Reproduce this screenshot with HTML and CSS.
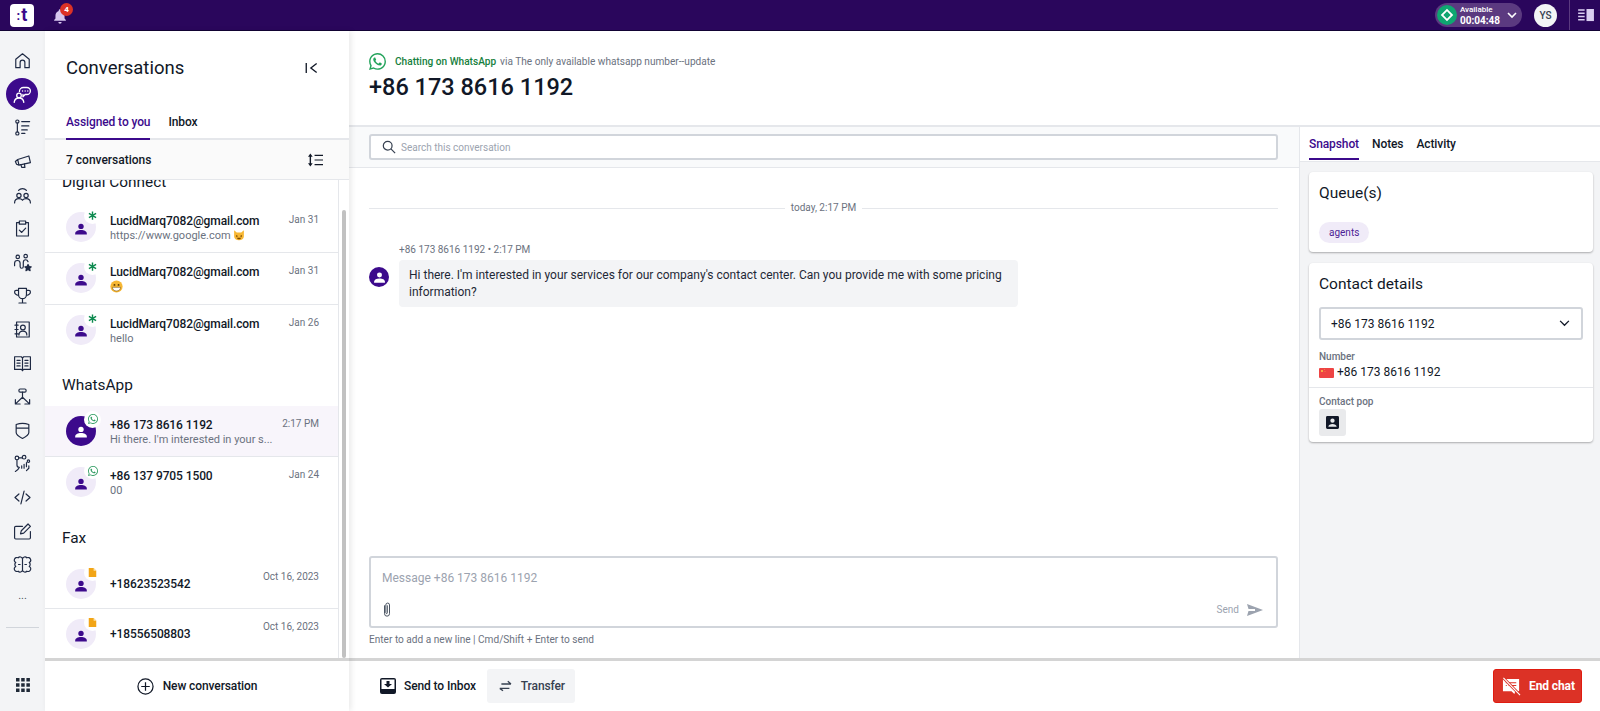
FILE: index.html
```html
<!DOCTYPE html>
<html lang="en">
<head>
<meta charset="utf-8">
<title>Conversations</title>
<link rel="stylesheet" href="styles.css">
</head>
<body>
<svg class="defs" width="0" height="0">
  <symbol id="person" viewBox="0 0 24 24"><circle cx="12" cy="7.5" r="4.6" fill="currentColor"/><path d="M2 20c0-4 4.500-6.200 10-6.200S22 16 22 20v1.500H2z" fill="currentColor"/></symbol>
  <symbol id="wa" viewBox="0 0 24 24"><path fill="currentColor" d="M17.472 14.382c-.297-.149-1.758-.867-2.03-.967-.273-.099-.471-.148-.67.15-.197.297-.767.966-.94 1.164-.173.199-.347.223-.644.075-.297-.15-1.255-.463-2.39-1.475-.883-.788-1.48-1.761-1.653-2.059-.173-.297-.018-.458.13-.606.134-.133.298-.347.446-.52.149-.174.198-.298.298-.497.099-.198.05-.371-.025-.52-.075-.149-.669-1.612-.916-2.207-.242-.579-.487-.5-.669-.51-.173-.008-.371-.01-.57-.01-.198 0-.52.074-.792.372-.272.297-1.04 1.016-1.04 2.479 0 1.462 1.065 2.875 1.213 3.074.149.198 2.096 3.2 5.077 4.487.709.306 1.262.489 1.694.625.712.227 1.36.195 1.871.118.571-.085 1.758-.719 2.006-1.413.248-.694.248-1.289.173-1.413-.074-.124-.272-.198-.57-.347m-5.421 7.403h-.004a9.87 9.87 0 01-5.031-1.378l-.361-.214-3.741.982.998-3.648-.235-.374a9.86 9.86 0 01-1.51-5.26c.001-5.45 4.436-9.884 9.888-9.884 2.64 0 5.122 1.03 6.988 2.898a9.825 9.825 0 012.893 6.994c-.003 5.45-4.437 9.884-9.885 9.884m8.413-18.297A11.815 11.815 0 0012.05 0C5.495 0 .16 5.335.157 11.892c0 2.096.547 4.142 1.588 5.945L.057 24l6.305-1.654a11.882 11.882 0 005.683 1.448h.005c6.554 0 11.89-5.335 11.893-11.893a11.821 11.821 0 00-3.48-8.413z"/></symbol>
  <symbol id="star" viewBox="0 0 12 12"><path d="M6 .5v11M1.200 3.200l9.600 5.600M10.800 3.200l-9.600 5.600" stroke="currentColor" stroke-width="1.900" fill="none"/></symbol>
  <symbol id="doc" viewBox="0 0 12 12"><path d="M1 0h6.500L11 3.500V12H1z" fill="currentColor"/><path d="M7.500 0v3.500H11z" fill="#fde3a7"/></symbol>
</svg>

<header class="topbar">
  <div class="logo"><span class="logo-dots">:</span><span class="logo-t">t</span></div>
  <div class="bell">
    <svg viewBox="0 0 24 24" class="bell-icon"><path d="M12 2a2 2 0 0 1 2 2v.6c3 .9 4.800 3.500 4.800 6.800v4.400l2 2.200v1H3.200v-1l2-2.200v-4.400c0-3.300 1.800-5.900 4.800-6.800V4a2 2 0 0 1 2-2zM9.500 21h5a2.500 2.500 0 0 1-5 0z" fill="#d6c6ee"/></svg>
    <span class="badge">4</span>
  </div>
  <div class="spacer"></div>
  <div class="status">
    <span class="status-dot"><svg viewBox="0 0 20 20" width="14" height="14"><rect x="5" y="5" width="10" height="10" transform="rotate(45 10 10)" fill="none" stroke="#fff" stroke-width="2.600"/></svg></span>
    <span class="status-text"><span class="status-label">Available</span><span class="status-time">00:04:48</span></span>
    <svg class="status-chev" viewBox="0 0 12 12" width="12" height="12"><path d="M2 4l4 4 4-4" fill="none" stroke="#fff" stroke-width="1.600"/></svg>
  </div>
  <div class="user">YS</div>
  <div class="panel-toggle">
    <svg viewBox="0 0 18 14" width="17" height="13"><path d="M0 1h7M0 4.500h7M0 8h7M0 11.500h7" stroke="#d9cdf0" stroke-width="1.700"/><rect x="9" y="0" width="8" height="13" fill="#d9cdf0"/></svg>
  </div>
</header>

<div class="app">
  <nav class="rail">
    <a class="rail-item"><svg class="ri" viewBox="0 0 24 24"><path d="M3.500 21V10.500L12 3.500l8.500 7V21H15v-6.500a3 3 0 0 0-6 0V21z"/></svg></a>
    <a class="rail-item active"><span class="rail-active"><svg class="ri" viewBox="0 0 24 24"><circle cx="8" cy="13" r="2.600"/><path d="M2.500 21c.3-3 2.500-5 5.500-5s5.200 2 5.500 5"/><path d="M8.500 8.500C8.500 6 10.500 4 13 4h4a4 4 0 0 1 0 8h-2l-2.500 2.500V12"/><path d="M12 8h.1M15 8h.1M18 8h.1"/></svg></span></a>
    <a class="rail-item"><svg class="ri" viewBox="0 0 24 24"><circle cx="5.500" cy="4.500" r="2"/><circle cx="5.500" cy="19.500" r="2"/><path d="M5.500 6.500v11M11 4.500h10M11 10h9M11 15h7M11 19.500h4"/></svg></a>
    <a class="rail-item"><svg class="ri" viewBox="0 0 24 24"><path d="M6 9.500L20 5l2 8.500-14.500 3zM6 9.500L3 12l1.500 3.500 3 1M10 16l1 3.500h4l-.5-4.500"/></svg></a>
    <a class="rail-item"><svg class="ri" viewBox="0 0 24 24"><path d="M7 5.500C9.500 2.500 14.500 2.500 17 5.500"/><circle cx="7.500" cy="12" r="2.700"/><circle cx="16.500" cy="12" r="2.700"/><path d="M2 21.500c0-3.500 2.200-5.500 5.500-5.500 2 0 3.500.7 4.500 2 1-1.300 2.500-2 4.500-2 3.300 0 5.500 2 5.500 5.500"/></svg></a>
    <a class="rail-item"><svg class="ri" viewBox="0 0 24 24"><path d="M8 4.500H4.500v17h15v-17H16"/><rect x="8" y="2.500" width="8" height="4"/><path d="M8 14l3 3 5-5.500"/></svg></a>
    <a class="rail-item"><svg class="ri" viewBox="0 0 24 24"><circle cx="6" cy="5" r="2.200"/><circle cx="16" cy="4" r="2.200"/><path d="M2 16v-3c0-2 1.500-3.500 3.500-3.500S9 11 9 13v4c0 3 4 3 4 0v-5c0-2 1.500-3.500 3-3.500s2.500 1 3 2.500"/><path d="M19 14.500l1.300 2.700 2.700.3-2 2 .6 2.800-2.600-1.400-2.600 1.400.6-2.800-2-2 2.700-.3z" class="filled"/></svg></a>
    <a class="rail-item"><svg class="ri" viewBox="0 0 24 24"><path d="M7 3h10v8a5 5 0 0 1-10 0zM7 5.500H4c-1.500 0-2 1-2 2.200C2 10 4.200 11.500 7.300 12M17 5.500h3c1.500 0 2 1 2 2.200 0 2.300-2.200 3.800-5.300 4.300M12 16v5M7.500 21.500h9"/></svg></a>
    <a class="rail-item"><svg class="ri" viewBox="0 0 24 24"><rect x="4.500" y="2.500" width="16" height="19"/><circle cx="12.500" cy="9.500" r="3"/><path d="M7.500 19c0-3 2-5 5-5s5 2 5 5M2.500 6.500h4M2.500 12h4M2.500 17.500h4"/></svg></a>
    <a class="rail-item"><svg class="ri" viewBox="0 0 24 24"><path d="M2 3.500h8.500L12 5l1.500-1.500H22v16h-8.500L12 21l-1.500-1.500H2zM12 5v16M5 8h4M5 11.500h4M5 15h4M15 8h4M15 11.500h4M15 15h4"/></svg></a>
    <a class="rail-item"><svg class="ri" viewBox="0 0 24 24"><rect x="7.500" y="2.500" width="9" height="4" rx="1.500"/><path d="M12 6.500v6.500M12 13l-8.500 8M12 13l8.500 8M3 16v5.500h6M21 16v5.500h-6"/></svg></a>
    <a class="rail-item"><svg class="ri" viewBox="0 0 24 24"><path d="M4 4.500C9 2.500 15 2.500 20 4.500v10c0 3-4 5.500-8 7.500-4-2-8-4.500-8-7.500zM4 9h16"/></svg></a>
    <a class="rail-item"><svg class="ri" viewBox="0 0 24 24"><circle cx="5" cy="5" r="2.300"/><circle cx="14" cy="4" r="2.300"/><circle cx="19.500" cy="9" r="1.500"/><path d="M5 7.500V14a3 3 0 0 0 3 3M7.300 5h4.500M3 22c3-1.500 4-3 5-5M20 15v3l-3 3M11 15v3M14 13v5M17 11v5"/></svg></a>
    <a class="rail-item"><svg class="ri" viewBox="0 0 24 24"><path d="M7.500 7.500L2.500 12l5 4.500M16.500 7.500l5 4.500-5 4.500M14 4l-4 16"/></svg></a>
    <a class="rail-item"><svg class="ri" viewBox="0 0 24 24"><path d="M12 5.500H3.500a1.500 1.500 0 0 0-1.500 1.500v13a1.500 1.500 0 0 0 1.500 1.500h17A1.500 1.500 0 0 0 22 20v-8M9.500 15l1-4 8.500-8.500 3 3-8.500 8.500z"/></svg></a>
    <a class="rail-item"><svg class="ri" viewBox="0 0 24 24"><path d="M12 5A3.200 3.200 0 0 0 6.500 3.500 3.200 3.200 0 0 0 3.500 9.500 3.200 3.200 0 0 0 3.500 14.500 3.200 3.200 0 0 0 6.500 20.500 3.200 3.200 0 0 0 12 19 3.200 3.200 0 0 0 17.500 20.500 3.200 3.200 0 0 0 20.500 14.500 3.200 3.200 0 0 0 20.500 9.500 3.200 3.200 0 0 0 17.500 3.500 3.200 3.200 0 0 0 12 5zM12 5v14M7 12h2M15 12h2"/></svg></a>
    <a class="rail-item rail-more">...</a>
    <div class="rail-rule"></div>
    <div class="spacer"></div>
    <a class="rail-grid"><svg viewBox="0 0 14 14" width="14" height="14"><path d="M0 0h3.500v3.500H0zM5.200 0h3.500v3.500H5.200zM10.400 0h3.500v3.500h-3.500zM0 5.200h3.500v3.500H0zM5.200 5.200h3.500v3.500H5.200zM10.400 5.200h3.500v3.500h-3.500zM0 10.400h3.500v3.500H0zM5.200 10.400h3.500v3.500H5.200zM10.400 10.400h3.500v3.500h-3.500z" fill="#1f2937"/></svg></a>
  </nav>

  <aside class="convs">
    <div class="convs-head">
      <h1 class="convs-title">Conversations</h1>
      <svg class="collapse" viewBox="0 0 18 14" width="15" height="12"><path d="M1.500 1v12M14 1.500L7 7l7 5.500" fill="none" stroke="#111827" stroke-width="1.600"/></svg>
    </div>
    <div class="convs-tabs">
      <span class="tab tab-on">Assigned to you</span>
      <span class="tab">Inbox</span>
    </div>
    <div class="convs-count">
      <span>7 conversations</span>
      <svg viewBox="0 0 16 14" width="15" height="14"><path d="M2.500 2v10" stroke="#111827" stroke-width="1.500"/><path d="M0 3.500L2.500 0 5 3.500zM0 10.500L2.500 14 5 10.500z" fill="#111827"/><path d="M7 2h9M7 7h9M7 12h9" stroke="#111827" stroke-width="1.300"/></svg>
    </div>
    <div class="list-wrap">
      <div class="list">
        <h2 class="group group-first">Digital Connect</h2>
        <div class="row line">
          <div class="av"><svg class="av-person"><use href="#person"/></svg><span class="av-badge b-star"><svg><use href="#star"/></svg></span></div>
          <div class="row-main"><div class="row-name">LucidMarq7082@gmail.com</div><div class="row-sub">https://www.google.com <svg class="emoji" viewBox="0 0 16 16"><path d="M1.500 1.500L5 4.500h6l3.500-3V10c0 3-3 5-6.500 5s-6.500-2-6.500-5z" fill="#f7b733"/><path d="M4 8.500l2 1-2 1M12 8.500l-2 1 2 1" stroke="#7a4a00" fill="none"/><path d="M5.500 11.500h5c0 1.500-1 2.300-2.500 2.300s-2.500-.8-2.500-2.300z" fill="#7a4a00"/></svg></div></div>
          <div class="row-date">Jan 31</div>
        </div>
        <div class="row line">
          <div class="av"><svg class="av-person"><use href="#person"/></svg><span class="av-badge b-star"><svg><use href="#star"/></svg></span></div>
          <div class="row-main"><div class="row-name">LucidMarq7082@gmail.com</div><div class="row-sub"><svg class="emoji emoji-lg" viewBox="0 0 16 16"><circle cx="8" cy="8" r="7.500" fill="#f7b733"/><circle cx="5.500" cy="6" r="1.200" fill="#5c3a00"/><circle cx="10.500" cy="6" r="1.200" fill="#5c3a00"/><path d="M3 9h10c0 3-2.200 4.500-5 4.500S3 12 3 9z" fill="#fff" stroke="#5c3a00" stroke-width=".6"/></svg></div></div>
          <div class="row-date">Jan 31</div>
        </div>
        <div class="row">
          <div class="av"><svg class="av-person"><use href="#person"/></svg><span class="av-badge b-star"><svg><use href="#star"/></svg></span></div>
          <div class="row-main"><div class="row-name">LucidMarq7082@gmail.com</div><div class="row-sub">hello</div></div>
          <div class="row-date">Jan 26</div>
        </div>
        <h2 class="group">WhatsApp</h2>
        <div class="row line row-on">
          <div class="av av-on"><svg class="av-person"><use href="#person"/></svg><span class="av-badge b-wa"><svg><use href="#wa"/></svg></span></div>
          <div class="row-main"><div class="row-name">+86 173 8616 1192</div><div class="row-sub">Hi there. I'm interested in your s...</div></div>
          <div class="row-date">2:17 PM</div>
        </div>
        <div class="row">
          <div class="av"><svg class="av-person"><use href="#person"/></svg><span class="av-badge b-wa"><svg><use href="#wa"/></svg></span></div>
          <div class="row-main"><div class="row-name">+86 137 9705 1500</div><div class="row-sub">00</div></div>
          <div class="row-date">Jan 24</div>
        </div>
        <h2 class="group group-fax">Fax</h2>
        <div class="row line row-fax">
          <div class="av"><svg class="av-person"><use href="#person"/></svg><span class="av-badge b-doc"><svg><use href="#doc"/></svg></span></div>
          <div class="row-main"><div class="row-name">+18623523542</div></div>
          <div class="row-date">Oct 16, 2023</div>
        </div>
        <div class="row row-fax">
          <div class="av"><svg class="av-person"><use href="#person"/></svg><span class="av-badge b-doc"><svg><use href="#doc"/></svg></span></div>
          <div class="row-main"><div class="row-name">+18556508803</div></div>
          <div class="row-date">Oct 16, 2023</div>
        </div>
      </div>
      <div class="scroll"><div class="scroll-thumb"></div></div>
    </div>
    <div class="convs-foot">
      <svg viewBox="0 0 18 18" width="17" height="17"><circle cx="9" cy="9" r="8" fill="none" stroke="#111827" stroke-width="1.300"/><path d="M9 4.500v9M4.500 9h9" stroke="#111827" stroke-width="1.300"/></svg>
      <span>New conversation</span>
    </div>
  </aside>

  <main class="main">
    <div class="head">
      <div class="head-via">
        <svg class="head-wa"><use href="#wa"/></svg>
        <span class="via-green">Chatting on WhatsApp</span>
        <span class="via-grey">via The only available whatsapp number--update</span>
      </div>
      <div class="head-title">+86 173 8616 1192</div>
    </div>
    <div class="work">
      <section class="chat">
        <div class="search-strip">
          <div class="search">
            <svg viewBox="0 0 16 16" width="14" height="14"><circle cx="6.500" cy="6.500" r="5" fill="none" stroke="#374151" stroke-width="1.400"/><path d="M10.200 10.200L15 15" stroke="#374151" stroke-width="1.400"/></svg>
            <span>Search this conversation</span>
          </div>
        </div>
        <div class="thread">
          <div class="day"><span>today, 2:17 PM</span></div>
          <div class="msg-meta">+86 173 8616 1192 • 2:17 PM</div>
          <div class="msg">
            <div class="msg-av"><svg><use href="#person"/></svg></div>
            <div class="bubble">Hi there. I'm interested in your services for our company's contact center. Can you provide me with some pricing information?</div>
          </div>
        </div>
        <div class="composer-wrap">
          <div class="composer">
            <div class="composer-ph">Message +86 173 8616 1192</div>
            <div class="composer-tools">
              <svg viewBox="0 0 12 20" width="10" height="17"><path d="M3 5v10a3 3 0 0 0 6 0V4.500a2.200 2.200 0 0 0-4.400 0V14a.9.9 0 0 0 1.800 0V5" fill="none" stroke="#4b5563" stroke-width="1.200"/></svg>
              <div class="send"><span>Send</span><svg viewBox="0 0 16 12" width="16" height="12"><path d="M0 0l16 6-16 6 1.500-5H8V5H1.500z" fill="#9ca3af"/></svg></div>
            </div>
          </div>
          <div class="hint">Enter to add a new line | Cmd/Shift + Enter to send</div>
        </div>
      </section>
      <section class="side">
        <div class="side-tabs">
          <span class="tab tab-on">Snapshot</span>
          <span class="tab">Notes</span>
          <span class="tab">Activity</span>
        </div>
        <div class="card card-q">
          <h3 class="card-title">Queue(s)</h3>
          <span class="chip">agents</span>
        </div>
        <div class="card card-c">
          <div class="card-pad">
            <h3 class="card-title">Contact details</h3>
            <div class="select"><span>+86 173 8616 1192</span><svg viewBox="0 0 12 8" width="11" height="7"><path d="M1 1l5 5 5-5" fill="none" stroke="#111827" stroke-width="1.500"/></svg></div>
            <div class="field-label">Number</div>
            <div class="field-value">
              <svg viewBox="0 0 15 10" width="15" height="10"><rect width="15" height="10" rx="1" fill="#ee4444"/><circle cx="3" cy="3" r="1.100" fill="#f8c14a"/><circle cx="5.500" cy="1.500" r=".4" fill="#f8c14a"/><circle cx="6" cy="3.500" r=".4" fill="#f8c14a"/></svg>
              <span>+86 173 8616 1192</span>
            </div>
          </div>
          <div class="card-pop">
            <div class="field-label">Contact pop</div>
            <div class="pop-btn"><svg viewBox="0 0 14 14" width="13" height="13"><path d="M1.500 0h11A1.500 1.500 0 0 1 14 1.500v11a1.500 1.500 0 0 1-1.500 1.500h-11A1.500 1.500 0 0 1 0 12.500v-11A1.500 1.500 0 0 1 1.500 0z" fill="#111827"/><circle cx="7" cy="5" r="2.300" fill="#e9eaec"/><path d="M2.500 11.500c.3-2 2.200-3 4.500-3s4.200 1 4.500 3z" fill="#e9eaec"/></svg></div>
          </div>
        </div>
      </section>
    </div>
    <footer class="foot">
      <div class="foot-btn foot-inbox">
        <svg viewBox="0 0 16 16" width="16" height="16"><path d="M2 0h12a2 2 0 0 1 2 2v12a2 2 0 0 1-2 2H2a2 2 0 0 1-2-2V2a2 2 0 0 1 2-2z" fill="#111827"/><rect x="1.500" y="1.500" width="13" height="9.500" fill="#fff"/><path d="M6.500 3h3v3H12L8 9.500 4 6h2.500z" fill="#111827"/></svg>
        <span>Send to Inbox</span>
      </div>
      <div class="foot-btn foot-transfer">
        <svg viewBox="0 0 16 14" width="16" height="14"><path d="M3 4.500h12M11 1l4 3.500M13 10H1M5 13l-4-3" fill="none" stroke="#374151" stroke-width="1.700"/></svg>
        <span>Transfer</span>
      </div>
      <div class="spacer"></div>
      <div class="end">
        <svg viewBox="0 0 20 20" width="19" height="19"><path d="M1 2h17v13h-4l-1 3-3-3H1z" fill="#fff"/><path d="M7 6h8M7 9h8M4 6h1M4 9h1" stroke="#dc3226" stroke-width="1.200"/><path d="M1.500 1L19 19" stroke="#dc3226" stroke-width="2.800"/><path d="M1.500 1L19 19" stroke="#fff" stroke-width="1.200"/></svg>
        <span>End chat</span>
      </div>
    </footer>
  </main>
</div>
</body>
</html>
```

FILE: styles.css
```css
* { box-sizing: border-box; }
html, body { margin: 0; height: 100%; overflow: hidden; }
body { font-family: Roboto, "Liberation Sans", sans-serif; color: #111827; background: #fff; font-size: 12px; display: flex; flex-direction: column; height: 711px; }
h1, h2, h3 { margin: 0; font-weight: 400; }
.defs { position: absolute; }
.spacer { flex: 1; }

.topbar { height: 31px; flex: none; background: #2a065c; border-bottom: 1px solid #120334; display: flex; align-items: center; padding-left: 10px; }
.logo { width: 24px; height: 23px; background: #fff; border-radius: 4px; display: flex; align-items: center; justify-content: center; color: #3c0a8c; font-weight: 700; line-height: 1; }
.logo-dots { margin-right: 1px; font-size: 13px; }
.logo-t { font-size: 18px; }
.bell { position: relative; margin-left: 18px; width: 16px; height: 18px; }
.bell-icon { width: 16px; height: 16px; display: block; margin-top: 2px; }
.badge { position: absolute; left: 8px; top: -3px; width: 13px; height: 13px; border-radius: 50%; background: #dc3226; color: #fff; font-size: 8px; font-weight: 700; line-height: 13px; text-align: center; }
.status { width: 87px; height: 24px; border-radius: 12px; background: #5b3a80; display: flex; align-items: center; padding-left: 2px; }
.status-dot { width: 20px; height: 20px; border-radius: 50%; background: #0fa671; display: flex; align-items: center; justify-content: center; }
.status-text { display: flex; flex-direction: column; margin-left: 3px; color: #fff; }
.status-label { font-size: 8px; line-height: 9px; font-weight: 500; }
.status-time { font-size: 10px; line-height: 11px; font-weight: 700; margin-top: 1px; }
.status-chev { margin-left: 6px; }
.user { width: 23px; height: 23px; margin-left: 12px; border-radius: 50%; background: #f3f4f6; color: #374151; font-size: 10px; font-weight: 500; line-height: 23px; text-align: center; }
.panel-toggle { margin-left: 12px; height: 30px; border-left: 1px solid #5b3a80; padding-left: 8px; width: 31px; display: flex; align-items: center; }

.app { flex: 1; min-height: 0; display: flex; }

.rail { width: 45px; flex: none; background: #f3f4f6; display: flex; flex-direction: column; padding-top: 13px; }
.rail-item { height: 33.600px; flex: none; display: flex; align-items: center; justify-content: center; color: #1f2a44; }
.ri { width: 19px; height: 19px; fill: none; stroke: currentColor; stroke-width: 1.500; stroke-linejoin: round; stroke-linecap: round; display: block; }
.ri .filled { fill: currentColor; }
.rail-active { width: 32px; height: 32px; margin-right: 1px; border-radius: 50%; background: #3c0a8c; color: #fff; display: flex; align-items: center; justify-content: center; }
.rail-active .ri { width: 21px; height: 21px; }
.rail-more { font-size: 11px; color: #4b5563; height: 45px; align-items: flex-start; padding-top: 7px; }
.rail-rule { height: 1px; margin: 0 6px; flex: none; background: #d1d5db; }
.rail-grid { height: 40px; flex: none; margin-bottom: 6px; display: flex; align-items: center; justify-content: center; }

.convs { width: 304px; flex: none; display: flex; flex-direction: column; position: relative; box-shadow: 2px 0 6px rgba(0,0,0,.09); background: #fff; z-index: 1; }
.convs-head { height: 75px; flex: none; display: flex; align-items: center; justify-content: space-between; padding: 0 29px 2px 21px; }
.convs-title { font-size: 18.5px; line-height: 24px; color: #111827; }
.convs-tabs { height: 34px; flex: none; display: flex; gap: 18px; padding-left: 21px; border-bottom: 2px solid #e5e7eb; }
.tab { font-size: 12px; font-weight: 500; line-height: 20px; letter-spacing: -.1px; color: #111827; height: 33px; padding-top: 7px; }
.convs .tab { height: 34px; padding-top: 6px; }
.tab-on { color: #3c0a8c; border-bottom: 2px solid #3c0a8c; }
.convs-count { height: 40px; flex: none; background: #fafafa; border-bottom: 1px solid #e5e7eb; padding: 0 26px 0 21px; display: flex; align-items: center; justify-content: space-between; font-size: 12px; font-weight: 500; }
.list-wrap { flex: 1; min-height: 0; display: flex; overflow: hidden; position: relative; }
.list { flex: 1; min-width: 0; border-right: 1px solid #e5e7eb; overflow: hidden; }
.scroll { width: 10px; flex: none; padding: 30px 3px 0 3px; background: #fff; }
.scroll-thumb { height: 100%; background: #c1c1c1; border-radius: 3px; }
.group { font-size: 15.4px; line-height: 20px; padding: 19px 0 11px 17px; height: 50px; color: #111827; font-weight: 400; }
.group-first { height: 30px; padding: 0 0 0 17px; margin-top: -8px; }
.group-fax { height: 51px; padding-top: 20px; }
.row { height: 51.300px; display: flex; padding: 10px 0 0 21px; position: relative; }
.row-fax { height: 50px; }
.line { border-bottom: 1px solid #e5e7eb; }
.row-on { background: #f8f5fb; }
.av { position: relative; width: 30px; height: 30px; border-radius: 50%; background: #f0ebf8; color: #3c0a8c; display: flex; align-items: center; justify-content: center; flex: none; }
.av-on { background: #3c0a8c; color: #fff; }
.av-person { width: 14px; height: 14px; margin-top: 3px; }
.av-badge { position: absolute; right: -5px; top: -5px; width: 17px; height: 17px; border-radius: 50%; background: #fff; display: flex; align-items: center; justify-content: center; }
.av-badge svg { width: 9px; height: 9px; }
.b-star { color: #0d8a4f; }
.b-wa { color: #2c9a5f; }
.b-wa svg { width: 10px; height: 10px; }
.b-doc { color: #f2a516; background: #fff; }
.row-main { margin-left: 14px; flex: 1; min-width: 0; }
.row-name { font-size: 12px; line-height: 16px; letter-spacing: -.1px; font-weight: 500; margin-top: 1px; color: #111827; white-space: nowrap; }
.row-fax .row-main { padding-top: 6px; }
.row-sub { font-size: 11px; line-height: 14px; color: #6b7280; margin-top: 0; white-space: nowrap; }
.row-date { font-size: 10px; color: #6b7280; line-height: 14px; padding: 1px 19px 0 0; white-space: nowrap; }
.emoji { width: 12px; height: 12px; vertical-align: -2px; }
.emoji-lg { width: 13px; height: 13px; }
.convs-foot { height: 53px; flex: none; border-top: 3px solid #d4d4d4; display: flex; align-items: center; justify-content: center; gap: 9px; font-size: 12px; font-weight: 500; letter-spacing: -.1px; }

.main { flex: 1; min-width: 0; display: flex; flex-direction: column; }
.head { height: 96px; flex: none; padding: 22px 20px 0; border-bottom: 2px solid #e5e7eb; }
.head-via { display: flex; align-items: center; font-size: 10.1px; line-height: 17px; }
.head-wa { width: 17px; height: 17px; color: #23a35b; margin-right: 9px; }
.via-green { color: #15803d; font-weight: 500; }
.via-grey { color: #6b7280; margin-left: 4px; }
.head-title { font-size: 23.5px; line-height: 28px; font-weight: 500; color: #111827; margin-top: 3px; }
.work { flex: 1; min-height: 0; display: flex; }
.chat { flex: 1; min-width: 0; display: flex; flex-direction: column; }
.search-strip { height: 41px; flex: none; padding: 7px 21px 0 20px; background: #f9fafb; border-bottom: 1px solid #e5e7eb; }
.search { height: 26px; background: #fff; border: 2px solid #d1d5db; border-radius: 3px; display: flex; align-items: center; gap: 5px; padding-left: 11px; font-size: 10px; color: #9ca3af; }
.thread { flex: 1; min-height: 0; padding: 0 21px 0 20px; }
.day { position: relative; height: 1px; background: #e5e7eb; margin-top: 40px; display: flex; justify-content: center; }
.day span { position: absolute; top: -7px; background: #fff; padding: 0 6px; font-size: 10px; line-height: 14px; color: #6b7280; }
.msg-meta { margin: 34px 0 0 30px; font-size: 10px; line-height: 14px; color: #6b7280; }
.msg { display: flex; margin-top: 3px; align-items: flex-start; }
.msg-av { width: 20px; height: 20px; margin-top: 7px; border-radius: 50%; background: #3c0a8c; color: #fff; display: flex; align-items: center; justify-content: center; flex: none; }
.msg-av svg { width: 13px; height: 13px; }
.bubble { margin-left: 10px; width: 619px; padding: 7px 10px 6px; background: #f3f4f6; border-radius: 4px; font-size: 12px; line-height: 17px; color: #1f2937; }
.composer-wrap { flex: none; padding: 0 21px 0 20px; height: 102px; }
.composer { height: 72px; border: 2px solid #d1d5db; border-radius: 3px; padding: 12px 11px 0; }
.composer-ph { font-size: 12px; line-height: 17px; color: #9ca3af; }
.composer-tools { display: flex; align-items: center; justify-content: space-between; margin-top: 14px; padding-right: 2px; }
.send { display: flex; align-items: center; gap: 8px; font-size: 10px; color: #9ca3af; }
.hint { font-size: 10.1px; line-height: 14px; color: #6b7280; margin-top: 5px; }
.side { width: 301px; flex: none; background: #f3f4f6; border-left: 1px solid #e5e7eb; display: flex; flex-direction: column; align-items: stretch; }
.side-tabs { height: 35px; flex: none; background: #fff; border-bottom: 1px solid #e5e7eb; display: flex; gap: 13px; padding-left: 9px; }
.card { background: #fff; margin: 10px 7px 0 9px; border-radius: 4px; box-shadow: 0 1px 2px rgba(0,0,0,.3); flex: none; }
.card-q { height: 80px; padding: 10px; }
.card-title { font-size: 15.5px; line-height: 22px; color: #111827; }
.chip { display: inline-block; height: 21px; margin-top: 18px; padding: 0 10px; border-radius: 11px; background: #f0ebf8; color: #4c1d95; font-size: 10px; line-height: 21px; }
.card-c { height: 179px; margin-top: 11px; }
.card-pad { padding: 10px 10px 0; height: 125px; border-bottom: 1px solid #e5e7eb; }
.select { height: 33px; margin-top: 12px; border: 2px solid #d1d5db; border-radius: 3px; display: flex; align-items: center; justify-content: space-between; padding: 0 11px 0 10px; font-size: 12px; }
.field-label { font-size: 10px; line-height: 14px; font-weight: 500; color: #6b7280; }
.card-pad .field-label { margin-top: 10px; }
.field-value { display: flex; align-items: center; gap: 3px; font-size: 12px; line-height: 17px; margin-top: 0; }
.card-pop { padding: 7px 10px 0; }
.pop-btn { width: 27px; height: 27px; border-radius: 3px; background: #e9eaec; display: flex; align-items: center; justify-content: center; }
.foot { height: 53px; flex: none; border-top: 3px solid #d4d4d4; display: flex; align-items: center; padding: 0 18px 0 21px; font-size: 12px; font-weight: 500; letter-spacing: -.1px; }
.foot-btn { height: 34px; display: flex; align-items: center; border-radius: 3px; }
.foot-inbox { gap: 8px; padding: 0 10px; margin-right: 1px; }
.foot-transfer { gap: 9px; padding: 0 10px 0 12px; background: #f3f4f6; color: #374151; width: 88px; }
.end { width: 89px; height: 34px; background: #dc3226; border: 1px solid #e01b10; border-radius: 3px; color: #fff; font-weight: 700; display: flex; align-items: center; gap: 8px; padding-left: 8px; }
```
